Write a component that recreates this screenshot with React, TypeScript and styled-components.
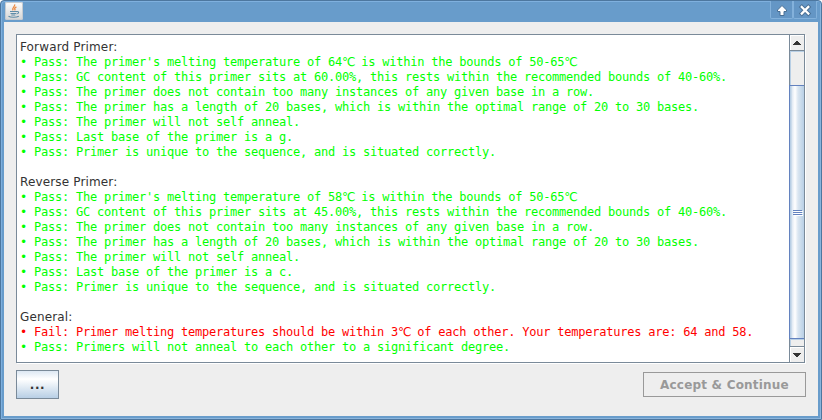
import React from "react";
import styled, { createGlobalStyle } from "styled-components";

const Global = createGlobalStyle`
  * { box-sizing: border-box; }
  body { margin: 0; overflow: hidden; background: #fff; }
`;

const Frame = styled.div`
  width: 822px;
  height: 420px;
  display: flex;
  flex-direction: column;
  background: #689ccb;
  border: 1px solid #4d779f;
  border-radius: 4px 4px 0 0;
  box-shadow: inset 1px 1px 0 #7fb0de, inset -1px -1px 0 #8ab4dc;
  padding: 0 3px 3px;
`;

const TitleBar = styled.header`
  height: 21px;
  flex: none;
  display: flex;
  align-items: flex-start;
  padding: 0 1px;
`;

const AppIcon = styled.div`
  width: 18px;
  height: 18px;
  margin-top: 1px;
  border-radius: 2px;
  background: linear-gradient(#fdfdfd, #d4d4d4);
  box-shadow: inset 0 0 0 1px #c5cbd1;
  svg { display: block; }
`;

const WindowButtons = styled.div`
  display: flex;
  margin-left: auto;
`;

const WindowButton = styled.button<{ $w: number }>`
  width: ${(p) => p.$w}px;
  height: 18px;
  padding: 0;
  background: #6496c5;
  border: 1px solid #83b1db;
  border-top: 0;
  border-radius: 0 0 2px 2px;
  svg { display: block; margin: 1px auto 0; }
`;

const Content = styled.main`
  flex: 1;
  min-height: 0;
  background: #eee;
  padding: 12px;
  display: flex;
  flex-direction: column;
`;

const ScrollPane = styled.section`
  height: 329px;
  flex: none;
  display: flex;
  background: #fff;
  border: 1px solid #7a8a99;
  margin-right: 1px;
  box-shadow: 1px 1px 0 #fff;
`;

const Report = styled.div`
  flex: 1;
  min-width: 0;
  padding: 5px 0 0 3px;
  overflow: hidden;
`;

const Heading = styled.div`
  height: 15px;
  font: 12px/15px "DejaVu Sans", sans-serif;
  letter-spacing: 0.15px;
  color: #333;
  white-space: pre;
`;

const Line = styled.div<{ $fail?: boolean }>`
  height: 15px;
  font: 12px/15px "DejaVu Sans Mono", "DejaVu Sans", monospace;
  letter-spacing: -0.224px;
  color: ${(p) => (p.$fail ? "#f00" : "#0f0")};
  white-space: pre;
`;

const Degree = styled.span`
  letter-spacing: -1.3px;
`;

const Gap = styled.div`
  height: 15px;
`;

const ScrollBar = styled.div`
  width: 15px;
  flex: none;
  display: flex;
  flex-direction: column;
  border-left: 1px solid #7a8a99;
  background: #eee;
`;

const Arrow = styled.button<{ $down?: boolean }>`
  height: 16px;
  flex: none;
  padding: 0;
  border: 0 solid #7a8a99;
  border-width: ${(p) => (p.$down ? "1px 0 0" : "0 0 1px")};
  background: #eee;
  box-shadow: inset 1px 1px 0 #fff;
  svg { display: block; margin: 0 auto; }
`;

const Track = styled.div<{ $h: number }>`
  height: ${(p) => p.$h}px;
  flex: none;
  box-shadow: inset 1px 1px 0 #b8cfe5;
`;

const Thumb = styled.div`
  flex: 1;
  margin-left: -1px;
  padding-top: 1px;
  display: flex;
  align-items: center;
  justify-content: center;
  border: 1px solid #6382bf;
  border-right: 0;
  background: linear-gradient(90deg, #b8cfe5 0, #b8cfe5 1px, #dfe9f3 2px, #fff 5px, #dae6f1 8px, #b8cfe5 100%);
  svg { flex: none; margin-left: 1px; }
`;

const Footer = styled.footer`
  display: flex;
  justify-content: space-between;
  padding-top: 7px;
`;

const Button = styled.button<{ $w: number; $h: number; $spacing: number }>`
  width: ${(p) => p.$w}px;
  height: ${(p) => p.$h}px;
  padding: 1px 0 0;
  border: 1px solid #7a8a99;
  background: linear-gradient(#dde8f3 0, #fff 30%, #b8cfe5 100%);
  font: bold 12px/15px "DejaVu Sans", sans-serif;
  letter-spacing: ${(p) => p.$spacing}px;
  color: #333;
  white-space: nowrap;
  &:disabled {
    margin-top: 2px;
    color: #999;
    border-color: #999;
    background: #eee;
  }
`;

const primerReport = (temp: number, gc: string, base: string) => [
  `The primer's melting temperature of ${temp}℃ is within the bounds of 50-65℃`,
  `GC content of this primer sits at ${gc}%, this rests within the recommended bounds of 40-60%.`,
  "The primer does not contain too many instances of any given base in a row.",
  "The primer has a length of 20 bases, which is within the optimal range of 20 to 30 bases.",
  "The primer will not self anneal.",
  `Last base of the primer is a ${base}.`,
  "Primer is unique to the sequence, and is situated correctly.",
];

const Result = ({ text, fail }: { text: string; fail?: boolean }) => (
  <Line $fail={fail}>
    {fail ? "• Fail: " : "• Pass: "}
    {text.split("℃").map((part, i) => (
      <React.Fragment key={i}>
        {i > 0 && <Degree>℃</Degree>}
        {part}
      </React.Fragment>
    ))}
  </Line>
);

const Passes = ({ items }: { items: string[] }) => (
  <>
    {items.map((t) => (
      <Result key={t} text={t} />
    ))}
  </>
);

export default function App() {
  return (
    <>
      <Global />
      <Frame>
        <TitleBar>
          <AppIcon>
            <svg width="18" height="18" viewBox="0 0 18 18" fill="none">
              <path d="M9.600 2.400c1 2-3.300 3.300-1.500 6M11.400 4.800c-2.300 1.200-2 1.900-1.100 3.600" stroke="#ec8b45" strokeWidth="1.300" />
              <path d="M5 9.500h6.500M5.500 11.500h5.500M6.300 13h4M11.500 9.600c3-.6 2.700 2 0 2.300M3.500 14.300c2 1.300 8 1.300 10.300 0" stroke="#5f8ca8" strokeWidth="1.100" />
            </svg>
          </AppIcon>
          <WindowButtons>
            <WindowButton $w={23} aria-label="Maximize">
              <svg width="14" height="14" viewBox="0 0 14 14">
                <path d="M7 2.500 11.500 7V8.500H9v4H5v-4H2.500V7Z" fill="#fff" stroke="#496f94" />
              </svg>
            </WindowButton>
            <WindowButton $w={24} aria-label="Close">
              <svg width="14" height="14" viewBox="0 0 14 14">
                <path d="m3.800 4 6.500 6.500M10.300 4l-6.500 6.500" stroke="#496f94" strokeWidth="4.200" strokeLinecap="square" />
                <path d="m3.800 4 6.500 6.500M10.300 4l-6.500 6.500" stroke="#fff" strokeWidth="2.300" strokeLinecap="square" />
              </svg>
            </WindowButton>
          </WindowButtons>
        </TitleBar>
        <Content>
          <ScrollPane>
            <Report>
              <Heading>Forward Primer:</Heading>
              <Passes items={primerReport(64, "60.00", "g")} />
              <Gap />
              <Heading>Reverse Primer:</Heading>
              <Passes items={primerReport(58, "45.00", "c")} />
              <Gap />
              <Heading>General:</Heading>
              <Result
                fail
                text="Primer melting temperatures should be within 3℃ of each other. Your temperatures are: 64 and 58."
              />
              <Passes items={["Primers will not anneal to each other to a significant degree."]} />
            </Report>
            <ScrollBar>
              <Arrow aria-label="Scroll up">
                <svg width="8" height="4" viewBox="0 0 8 4" shapeRendering="crispEdges">
                  <path d="M3 0h2v1h1v1h1v1h1v1H0V3h1V2h1V1h1Z" fill="#333" />
                </svg>
              </Arrow>
              <Track $h={34} />
              <Thumb>
                <svg width="10" height="6" viewBox="0 0 10 6" shapeRendering="crispEdges">
                  <path d="M1 1h9v1H1zM1 3h9v1H1zM1 5h9v1H1z" fill="#fff" />
                  <path d="M0 0h9v1H0zM0 2h9v1H0zM0 4h9v1H0z" fill="#6382bf" />
                </svg>
              </Thumb>
              <Track $h={7} />
              <Arrow $down aria-label="Scroll down">
                <svg width="8" height="4" viewBox="0 0 8 4" shapeRendering="crispEdges">
                  <path d="M0 0h8v1H7v1H6v1H5v1H3V3H2V2H1V1H0Z" fill="#333" />
                </svg>
              </Arrow>
            </ScrollBar>
          </ScrollPane>
          <Footer>
            <Button $w={43} $h={29} $spacing={0.6}>...</Button>
            <Button $w={163} $h={25} $spacing={0.2} disabled>Accept &amp; Continue</Button>
          </Footer>
        </Content>
      </Frame>
    </>
  );
}
